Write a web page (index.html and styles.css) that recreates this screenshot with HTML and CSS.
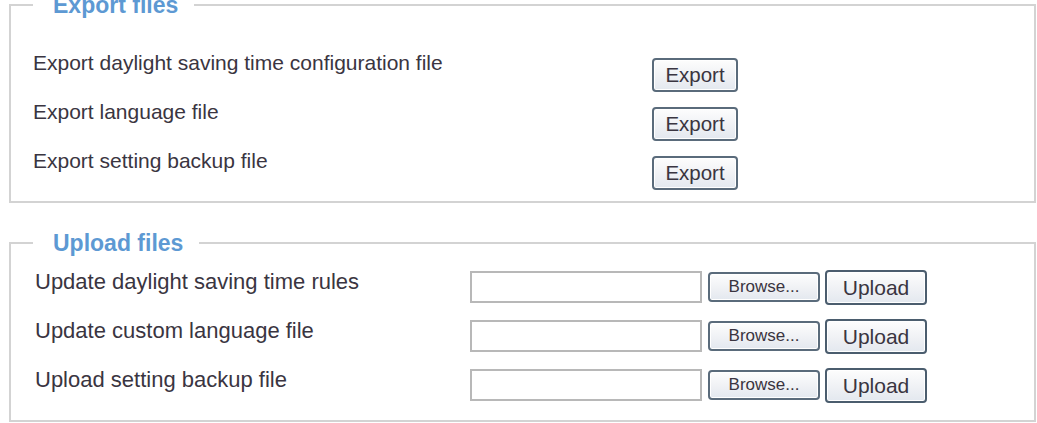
FILE: index.html
```html
<!DOCTYPE html>
<html>
<head>
<meta charset="utf-8">
<link rel="stylesheet" href="styles.css">
</head>
<body>
<div class="page">
  <fieldset class="box export-box">
    <legend class="box-title">Export files</legend>
    <div class="row">
      <span class="label">Export daylight saving time configuration file</span>
      <button class="btn btn-export">Export</button>
    </div>
    <div class="row">
      <span class="label">Export language file</span>
      <button class="btn btn-export">Export</button>
    </div>
    <div class="row">
      <span class="label">Export setting backup file</span>
      <button class="btn btn-export">Export</button>
    </div>
  </fieldset>

  <fieldset class="box upload-box">
    <legend class="box-title">Upload files</legend>
    <div class="row">
      <span class="label label-up">Update daylight saving time rules</span>
      <span class="file-field"></span>
      <button class="btn btn-browse">Browse...</button>
      <button class="btn btn-upload">Upload</button>
    </div>
    <div class="row">
      <span class="label label-up">Update custom language file</span>
      <span class="file-field"></span>
      <button class="btn btn-browse">Browse...</button>
      <button class="btn btn-upload">Upload</button>
    </div>
    <div class="row">
      <span class="label label-up">Upload setting backup file</span>
      <span class="file-field"></span>
      <button class="btn btn-browse">Browse...</button>
      <button class="btn btn-upload">Upload</button>
    </div>
  </fieldset>
</div>
</body>
</html>
```

FILE: styles.css
```css
html, body {
  margin: 0;
  padding: 0;
  background: #ffffff;
}

body {
  font-family: "Liberation Sans", Arial, sans-serif;
  color: #3a3541;
  overflow: hidden;
}

.page {
  padding: 0 1px 0 9px;
}

.box {
  margin: 0;
  border: 2px solid #d3d3d3;
  padding: 41px 0 3px 22px;
  min-width: 0;
}

.box-title {
  margin-left: 0;
  padding: 0 16px 0 20px;
  font-size: 23px;
  font-weight: bold;
  line-height: 10px;
  color: #5d99d3;
}

.export-box {
  padding-top: 41px;
}

.upload-box {
  margin-top: 35px;
  padding-top: 22px;
  padding-left: 24px;
}

.upload-box .box-title {
  margin-left: -2px;
}

.row {
  display: flex;
  align-items: flex-start;
  height: 49px;
}

.label {
  font-size: 21px;
  line-height: 24px;
  width: 619px;
  flex: none;
}

.label-up {
  font-size: 22px;
  width: 435px;
  line-height: 24px;
}

.btn {
  font-family: "Liberation Sans", Arial, sans-serif;
  color: #3a3541;
  border: 2px solid #5a6b7b;
  border-radius: 4px;
  background: linear-gradient(#fdfdfd, #eef0f4 60%, #e3e8ef);
  padding: 0;
  flex: none;
  box-shadow: inset 0 0 0 1px #ffffff;
}

.btn-export {
  width: 86px;
  height: 34px;
  margin-top: 7px;
  font-size: 20.5px;
}

.file-field {
  display: block;
  width: 232px;
  height: 32px;
  box-sizing: border-box;
  border: 2px solid #b8b8b8;
  background: #ffffff;
  margin-top: 1px;
  flex: none;
}

.btn-browse {
  width: 112px;
  height: 30px;
  margin-left: 6px;
  margin-top: 2px;
  font-size: 17px;
}

.btn-upload {
  width: 102px;
  height: 35px;
  margin-left: 5px;
  margin-top: 0;
  font-size: 21px;
  border-color: #4b5d6e;
}
```
